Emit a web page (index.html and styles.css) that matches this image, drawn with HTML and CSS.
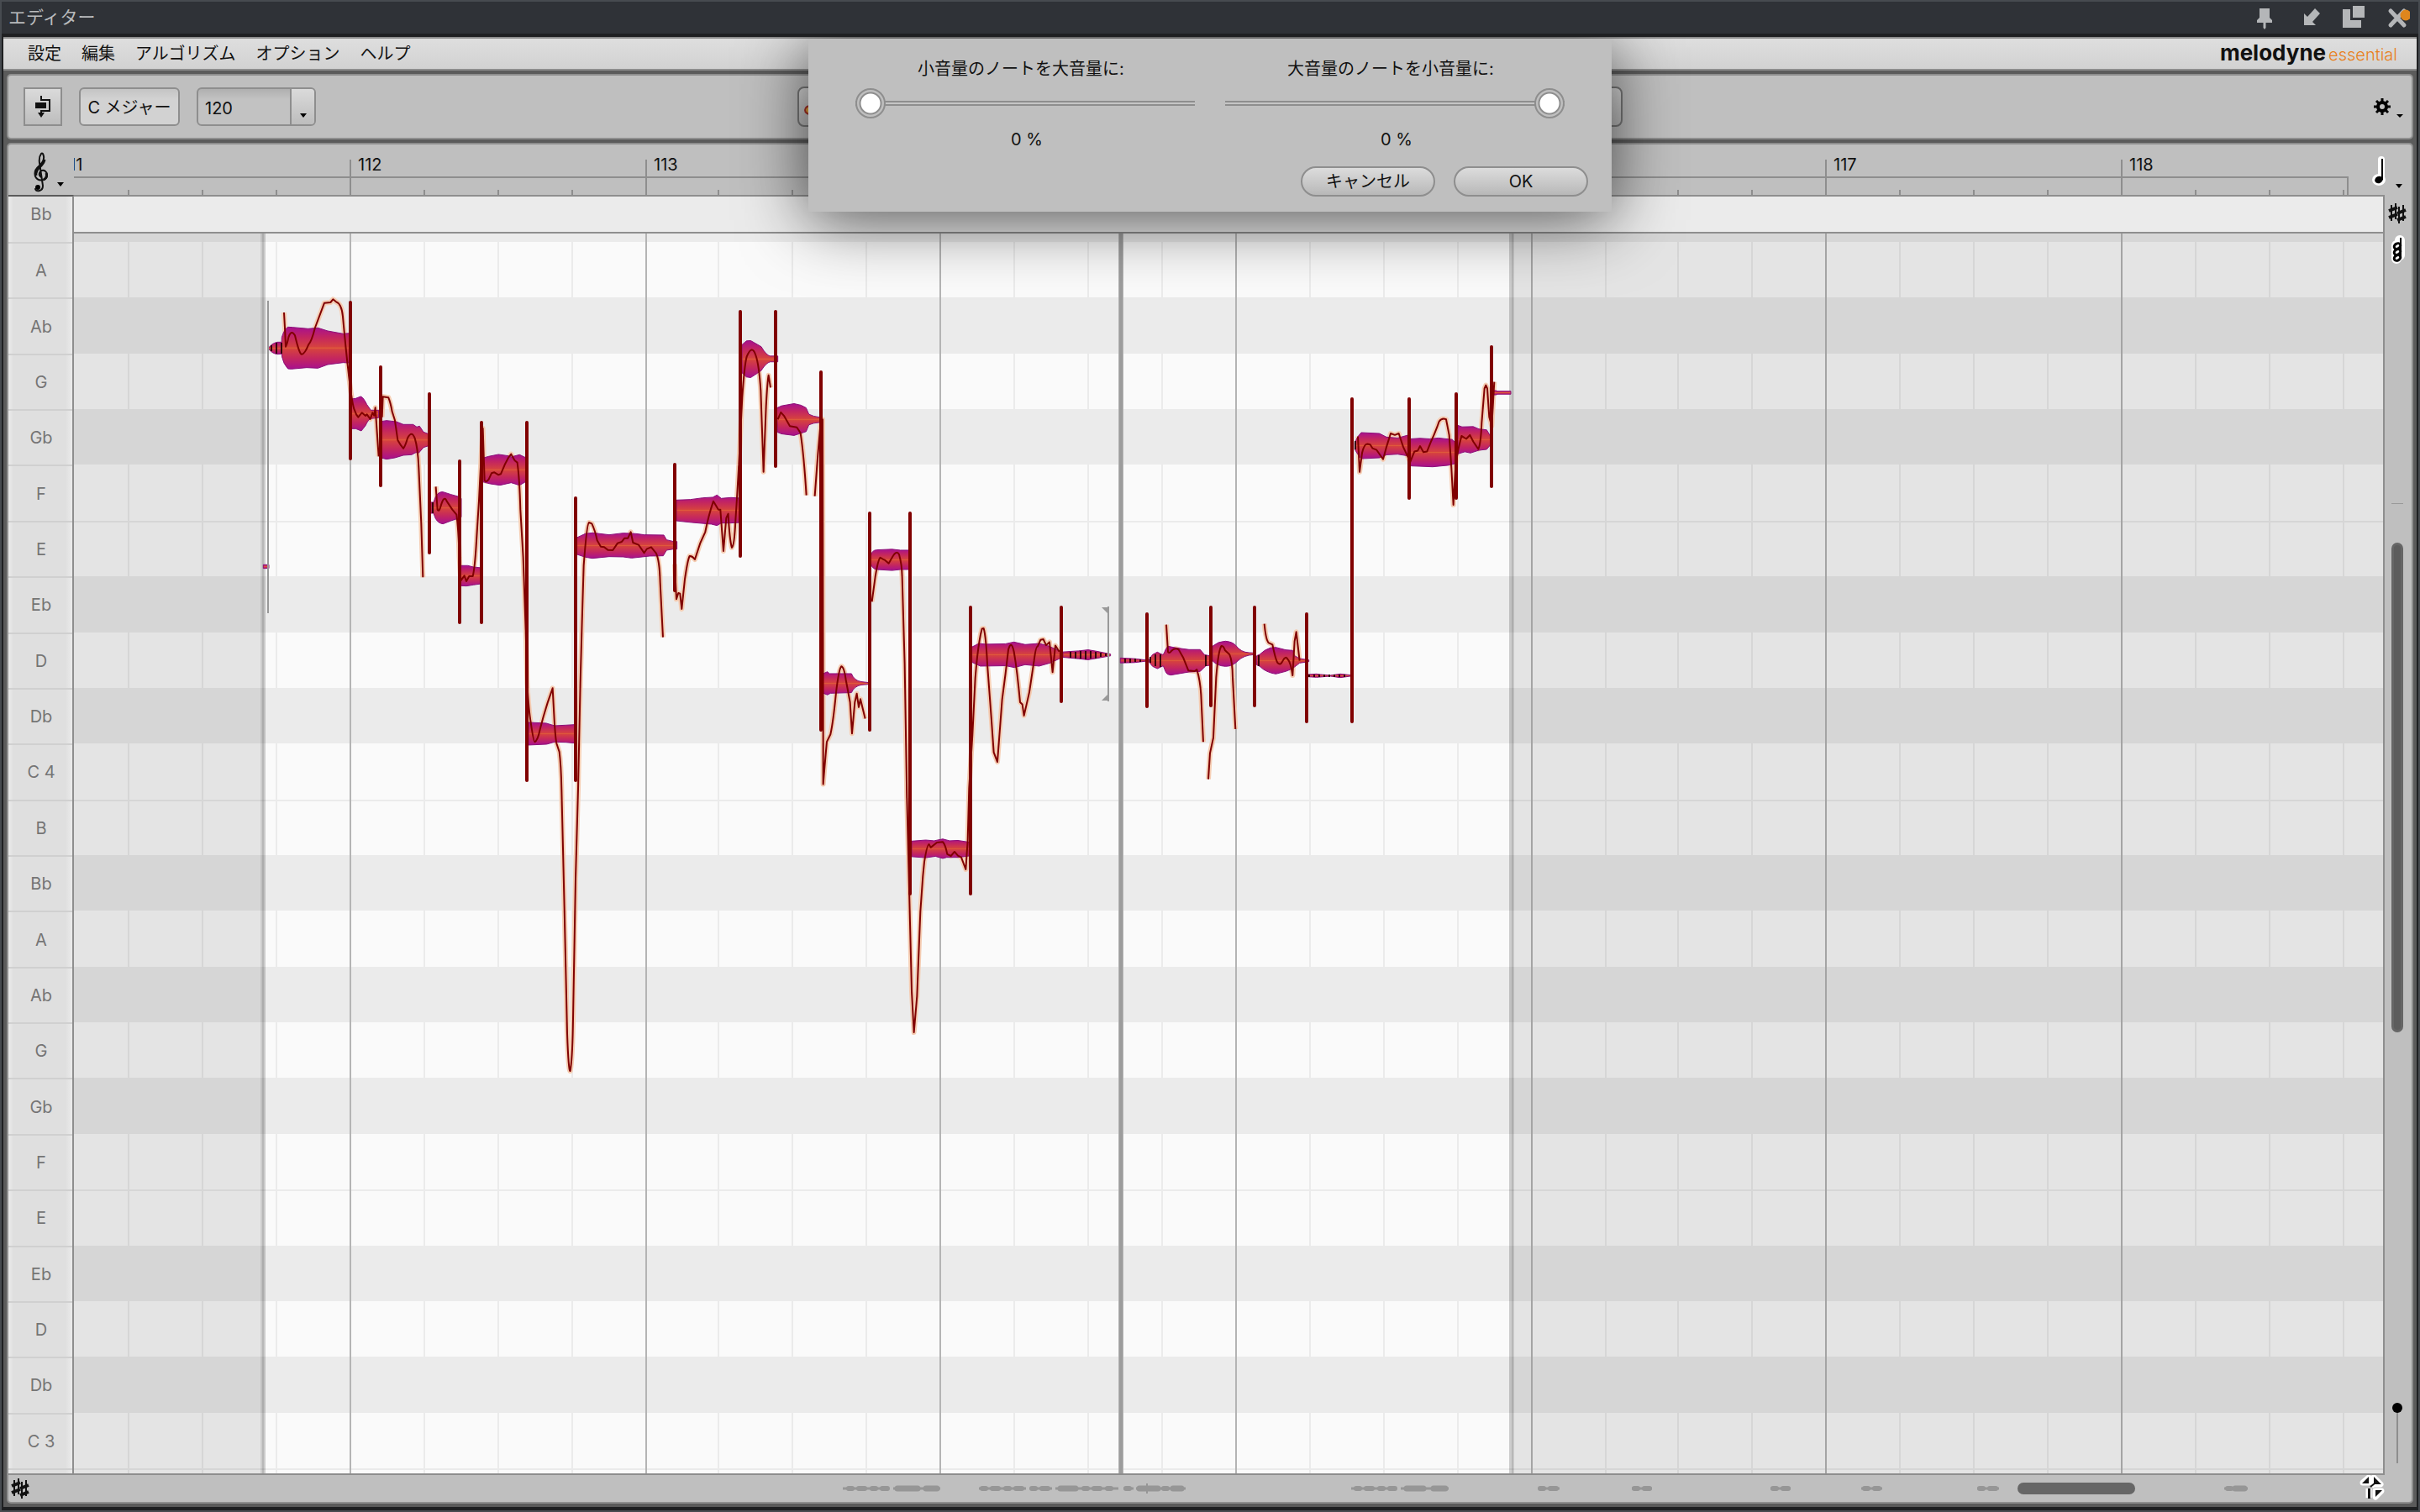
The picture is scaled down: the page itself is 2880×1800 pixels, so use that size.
FILE: index.html
```html
<!DOCTYPE html>
<html lang="ja">
<head>
  <meta charset="UTF-8" />
  <meta name="viewport" content="width=device-width, initial-scale=1.0" />
  <title>エディター</title>
  <link rel="stylesheet" href="styles.css">
</head>
<body>
  <header class="titlebar">
    <h1>エディター</h1>
    <div class="window-buttons">
      <button type="button" aria-label="Pin"><svg width="28" height="28" viewBox="0 0 28 28"><path fill="#b4b6b8" d="M8 3h12v11l3 3v3h-7.500v6l-1.500 2-1.500-2v-6H5v-3l3-3z"/></svg></button>
      <button type="button" aria-label="Minimize"><svg width="28" height="28" viewBox="0 0 28 28"><path fill="#b4b6b8" d="M8 9l4 4L21 3l6 6-9 10 4 4H8z"/></svg></button>
      <button type="button" aria-label="Restore"><svg width="28" height="28" viewBox="0 0 28 28"><path fill="#b4b6b8" d="M13 0h14v14H13zM1 4h9v13h13v9H1z"/></svg></button>
      <button type="button" aria-label="Close"><svg width="28" height="28" viewBox="0 0 28 28"><path fill="none" stroke="#b4b6b8" stroke-width="5" stroke-linecap="round" d="M5 6l16 17M21 6L5 23"/><circle cx="23" cy="11" r="6.500" fill="#df861d"/></svg></button>
    </div>
  </header>

  <main class="plugin">
    <nav class="menubar">
      <a href="#">設定</a>
      <a href="#">編集</a>
      <a href="#">アルゴリズム</a>
      <a href="#">オプション</a>
      <a href="#">ヘルプ</a>
      <div class="logo"><strong>melodyne</strong><span>essential</span></div>
    </nav>

    <section class="toolbar">
      <button type="button" class="square" aria-label="Auto scroll">
        <svg width="20" height="26" viewBox="0 0 20 26"><path fill="none" stroke="#111" stroke-width="2" d="M8 0v5h10v13H8v4"/><path fill="#111" d="M1 8h13v7H1zM4 20h8l-4 6z"/></svg>
      </button>
      <button type="button" class="scale">C メジャー</button>
      <div class="tempo">
        <input type="text" value="120" aria-label="Tempo">
        <button type="button" aria-label="Tempo menu"><svg width="8" height="5"><path d="M0 0h8L4 5z"/></svg></button>
      </div>
      <div class="toolbox">
        <svg width="12" height="16" viewBox="0 0 12 16"><path fill="#e8a33c" stroke="#a8322a" stroke-width="2" d="M11 2Q1 3 1 8t10 6z"/></svg>
      </div>
      <button type="button" class="plain gear" aria-label="Settings">
        <svg width="34" height="26" viewBox="0 0 34 26"><circle cx="9" cy="13" r="5" fill="none" stroke="#000" stroke-width="4"/><path stroke="#000" stroke-width="3" d="M9 3v5M9 18v5M-1 13h5M14 13h5M2 6l3 3M13 17l3 3M16 6l-3 3M2 20l3-3"/><path d="M26 22h8l-4 4z"/></svg>
      </button>
    </section>

    <section class="editor">
      <div class="ruler-row">
        <button type="button" class="plain clef" aria-label="Clef">
          <svg width="44" height="50" viewBox="0 0 44 50"><path fill="none" stroke="#111" stroke-width="2" stroke-linecap="round" d="M17 32q-4-3-1-7 4-3 7 1 3 6-3 9-7 2-10-4-2-7 4-12 7-6 6-12-1-5-3-3-3 4-2 11l4 27q0 5-4 6-4 1-5-2"/><circle cx="13" cy="44" r="3"/><path fill="none" stroke="#111" stroke-width="3" d="M11 30q-1-5 4-10 5-4 6-9M20 35q5-3 3-8"/><path d="M36 38h8l-4 5z"/></svg>
        </button>
        <svg class="ruler">
          <g transform="translate(-88 -172)">
            <path class="ruler-line" d="M88 211H2794M2794 210V232M87 210V232M417 190V232M769 190V232M1119 190V232M1471 190V232M1823 190V232M2173 190V232M2525 190V232"/>
            <path class="ruler-line" d="M153 226V232M241 226V232M329 226V232M505 226V232M593 226V232M681 226V232M855 226V232M943 226V232M1031 226V232M1207 226V232M1295 226V232M1383 226V232M1559 226V232M1647 226V232M1735 226V232M1911 226V232M1997 226V232M2085 226V232M2261 226V232M2349 226V232M2437 226V232M2613 226V232M2701 226V232M2789 226V232"/>
            <text x="74" y="203">111</text>
            <text x="426" y="203">112</text>
            <text x="778" y="203">113</text>
            <text x="2182" y="203">117</text>
            <text x="2534" y="203">118</text>
          </g>
        </svg>
        <button type="button" class="plain note-value" aria-label="Note value">
          <svg width="44" height="44" viewBox="0 0 44 44"><g stroke="#fff" stroke-width="8" stroke-linejoin="round" stroke-linecap="round"><ellipse cx="12" cy="30" rx="4" ry="3"/><path d="M15 6v23"/></g><ellipse cx="12" cy="30" rx="5" ry="4" transform="rotate(-25 12 30)"/><path stroke="#000" stroke-width="2" d="M16 5v25"/><path d="M32 35h8l-4 5z"/></svg>
        </button>
      </div>

      <div class="main-row">
        <div class="keys">
          <div class="key first">Bb</div>
          <div class="key-grid">
            <div class="key">A</div>
            <div class="key">Ab</div>
            <div class="key">G</div>
            <div class="key">Gb</div>
            <div class="key">F</div>
            <div class="key">E</div>
            <div class="key">Eb</div>
            <div class="key">D</div>
            <div class="key">Db</div>
            <div class="key">C 4</div>
            <div class="key">B</div>
            <div class="key">Bb</div>
            <div class="key">A</div>
            <div class="key">Ab</div>
            <div class="key">G</div>
            <div class="key">Gb</div>
            <div class="key">F</div>
            <div class="key">E</div>
            <div class="key">Eb</div>
            <div class="key">D</div>
            <div class="key">Db</div>
            <div class="key">C 3</div>
          </div>
          <div class="key last"></div>
        </div>

        <div class="roll">
          <div class="lane-top"></div>
          <div class="lane-edge"></div>
          <div class="lane-grid">
            <i></i><i class="dark"></i><i></i><i class="dark"></i><i></i><i class="line"></i><i class="dark"></i><i></i><i class="dark"></i><i></i><i class="line"></i>
            <i class="dark"></i><i></i><i class="dark"></i><i></i><i class="dark"></i><i></i><i class="line"></i><i class="dark"></i><i></i><i class="dark"></i><i></i>
          </div>
          <div class="lane-last"></div>

          <svg class="notes">
            <defs>
              <linearGradient id="blob" x1="0" y1="0" x2="0" y2="1">
                <stop offset="0" stop-color="#a8108f"/>
                <stop offset=".25" stop-color="#c4265f"/>
                <stop offset=".47" stop-color="#d54140"/>
                <stop offset=".5" stop-color="#df5a3c"/>
                <stop offset=".53" stop-color="#d54140"/>
                <stop offset=".75" stop-color="#c4265f"/>
                <stop offset="1" stop-color="#a8108f"/>
              </linearGradient>
              <g id="curves">
                <g transform="translate(280 330) scale(.3333)">
                  <path d="M174 126L177 180L180 248Q185 240 190 215Q200 185 213 208Q230 280 238 275Q248 275 262 240Q272 230 285 180L318 92L340 90L349 79L360 88Q380 95 384 140Q395 260 403 330Q415 440 424 470L432 490L439 500L452 484L465 495L470 490L482 507L490 484L496 494L500 466L512 640"/>
                  <path d="M524 500L527 427L547 430Q555 450 560 480Q572 510 574 540L580 582Q590 600 600 612Q608 600 615 575Q630 545 641 575Q652 610 655 680L664 880L670 1072"/>
                  <path d="M716 748L722 830Q728 840 733 820Q745 775 755 800L775 830L790 848Q797 900 800 1000L805 1084L818 1066L825 1086L835 1068L848 1068Q855 1040 860 960L870 800L878 640L884 540L890 725Q895 735 905 722L915 700L925 697L940 706L948 703L962 670L975 645L985 632L998 655L1007 662Q1015 720 1018 830L1028 1000L1037 1260"/>
                </g>
                <g transform="translate(520 480) scale(.3333)">
                  <path d="M317 810L322 1000Q328 1100 335 1140Q345 1210 349 1210Q360 1205 368 1165L380 1120L395 1070L413 1018L418 1110Q422 1190 427 1215L437 1245Q443 1290 445 1380L455 1800L465 2250Q470 2390 476 2385Q484 2340 486 2200L495 1700L504 1380L512 1000L518 780L524 580Q535 430 543 426L553 430Q565 455 572 490L585 512L597 514L610 524L628 525L645 500L660 495L670 482L682 482L692 460L700 498L720 506L740 535L750 520L765 514L782 535Q795 560 797 640L807 836"/>
                  <path d="M849 575L855 700L862 678L868 680L874 735L885 630Q895 560 902 546Q912 545 921 558L940 500L958 460Q970 400 987 350L1005 380L1012 380L1023 528L1033 410L1040 395Q1045 490 1053 516Q1062 510 1066 420Q1072 330 1078 220"/>
                </g>
                <g transform="translate(780 350) scale(.3333 .3827)">
                  <path d="M298 531L310 322Q318 220 326 195Q345 155 358 190Q370 220 376 300L386 553L395 350Q400 270 404 253L411 291"/>
                  <path d="M437 390L448 368L460 380L480 411L505 415L518 432Q530 500 539 626"/>
                  <path d="M569 629L580 500L590 400L597 390L599 1300L599 1525Q606 1450 612 1393L625 1370Q635 1330 645 1240Q655 1165 664 1158Q674 1160 680 1200L695 1270L702 1367L712 1270L719 1243L726 1285L732 1260L749 1321"/>
                  <path d="M773 957L785 880Q795 825 803 820Q812 825 820 828L833 838L845 820Q860 795 870 810Q880 840 881 880L890 1150L898 1568"/>
                </g>
                <g transform="translate(1020 580) scale(.3333 .4209)">
                  <path d="M178 879L188 1200L195 1425L203 1542L214 1440L226 1200L235 1100L240 1060Q250 1010 257 1010L263 1019L285 1005L306 1003Q315 1010 322 1038L335 1043L348 1031L360 1042L372 1047L388 1081L395 1000L400 850L412 700L422 540Q432 440 446 400L452 399Q460 420 465 500L480 660L488 750L501 777L518 600Q530 530 540 460Q550 430 560 465Q572 520 582 608L590 614L596 646L615 580L632 490Q638 450 645 450L655 432L665 430L675 447L687 438L698 523L708 448L722 465"/>
                </g>
                <g transform="translate(1300 640) scale(.3333)">
                  <path d="M264 311L270 408Q276 415 282 405Q295 392 308 400L325 430L343 475L365 477L373 471Q385 510 388 560L396 730"/>
                  <path d="M414 863L420 770L432 715L442 500Q450 400 461 387Q468 385 474 403L490 418Q500 440 501 500L511 684"/>
                  <path d="M614 308Q620 370 630 376L643 382Q655 440 662 448Q672 458 680 440Q690 420 698 435Q708 445 715 492L722 370L728 337L740 440"/>
                </g>
                <g transform="translate(1540 400) scale(.3333 .3571)">
                  <path d="M228 335L234 453L243 390Q250 360 262 360L272 362L280 374L295 380L318 411L330 370L345 325L360 330L374 325L390 370L415 420L430 385L442 382L450 367L462 387L475 385L490 350Q505 320 518 285Q528 272 543 278L554 330L562 440L569 563L577 430L587 375L598 333L615 343L628 330L640 352L658 377Q667 360 670 290L680 175L685 164L690 175L697 270L706 300L715 153"/>
                </g>
              </g>
            </defs>

            <g transform="translate(-88 -234)">
              <!-- beats and bars -->
              <path class="beat" d="M153 278V1754M241 278V1754M329 278V1754M505 278V1754M593 278V1754M681 278V1754M855 278V1754M943 278V1754M1031 278V1754M1207 278V1754M1295 278V1754M1383 278V1754M1559 278V1754M1647 278V1754M1735 278V1754M1911 278V1754M1997 278V1754M2085 278V1754M2261 278V1754M2349 278V1754M2437 278V1754M2613 278V1754M2701 278V1754M2789 278V1754"/>
              <path class="bar" d="M417 278V1754M769 278V1754M1119 278V1754M1471 278V1754M1823 278V1754M2173 278V1754M2525 278V1754"/>
              <rect class="shade" x="88" y="278" width="222" height="1476"/>
              <rect class="shade" x="1802" y="278" width="100%" height="1476"/>
              <path class="edge" d="M313 278V1754M1799 278V1754"/>
              <path class="edge-core" d="M313 278V1754M1800 278V1754"/>
              <path class="split" d="M1334 278V1754"/>
              <path class="split-core" d="M1334 278V1754"/>

              <use href="#curves" class="halo"/>

              <!-- note blobs -->
              <g class="blobs">
                <g transform="translate(280 330) scale(.3333)">
                  <path d="M100 1027H120V1040H100z"/>
                  <path d="M118 254Q130 236 150 232L165 232L165 274L150 275Q130 272 118 254z"/>
                  <path d="M165 250L166 215Q175 185 188 178L205 179L260 184L295 181L330 192L385 202L408 200L408 306L385 305L330 312L295 325L255 323L200 328L188 327Q172 310 167 285z"/>
                  <path d="M414 435L430 433L448 426Q458 430 470 455L484 475L512 475V502L484 505Q475 508 465 530L450 549L430 541L414 541z"/>
                  <path d="M522 515L540 512L575 516L600 526L635 526L648 535L658 532L672 553L690 560V602L672 608L655 628L645 626L630 634L600 636L570 645L540 650L524 646z"/>
                  <path d="M699 804H708L715 785Q725 765 742 767L770 776L795 783L807 790V857L795 862L770 870L742 881Q725 880 715 862L708 843H699z"/>
                  <path d="M803 1030L830 1030L850 1035L878 1038V1095L850 1099L825 1103L803 1102z"/>
                  <path d="M881 647L905 640L940 633L975 638L985 642L1015 634L1038 645V730L1015 743L985 734L945 743L910 738L881 730z"/>
                </g>
                <g transform="translate(520 480) scale(.3333)">
                  <path d="M327 1140L390 1143L420 1152L460 1150L492 1148V1214L460 1211L420 1210L392 1218L327 1221z"/>
                  <path d="M500 480L530 466L555 463L615 470L665 464L710 466L740 470L810 471L820 488L845 494H857V521H845L820 525L808 545L760 546L695 553L665 549L615 548L555 554L530 550L500 540z"/>
                  <path d="M855 346L905 344L950 338L985 336L1000 328L1015 340L1050 337L1082 339V426L1050 428L1015 428L1000 437L980 432L910 426L855 420z"/>
                </g>
                <g transform="translate(780 350) scale(.3333 .3827)">
                  <path d="M309 158L325 146L340 145L378 164Q395 190 410 193H437V211H410Q395 214 378 238Q350 255 340 260L325 258L309 245z"/>
                  <path d="M433 355L450 348L495 341L520 346L538 354L548 374L565 380L590 384V399L565 402L548 407L538 428L495 440L450 435L436 430z"/>
                  <path d="M597 1182L614 1175L622 1181L700 1181Q710 1203 735 1206L762 1209V1214L735 1216Q710 1220 700 1240L625 1242L614 1247L597 1241z"/>
                  <path d="M769 815Q772 797 790 796L845 794L875 797H909V857H875L845 860L790 857Q775 855 769 840z"/>
                </g>
                <g transform="translate(1020 580) scale(.3333 .4209)">
                  <path d="M195 1001L245 998L275 1000L306 995L330 1000L360 999L400 1004V1043L360 1047L320 1047L306 1050L280 1044L245 1048L195 1045z"/>
                  <path d="M410 452L435 442L460 444L530 443L560 438L600 445L650 442L680 448L725 464V484L690 497L650 506L600 502L562 510L530 505L440 506L410 495z"/>
                  <path d="M735 466L790 463L825 460L855 464L905 472V477L855 484L825 488L790 485L735 481z"/>
                  <path d="M940 483L990 485L1033 489V492L990 496L940 497z"/>
                </g>
                <g transform="translate(1300 640) scale(.3333)">
                  <path d="M203 435L215 418L232 409L250 418L255 415Q262 395 270 388L300 394L345 400L385 400L400 418L421 423V456L405 458L385 478L345 480L280 491Q265 490 262 480L253 458L232 468L215 460L203 445z"/>
                  <path d="M429 388Q450 370 475 370Q500 372 512 385Q530 410 560 411L577 412V418Q540 420 520 440Q500 460 475 460Q445 458 429 440z"/>
                  <path d="M587 422L598 417Q615 400 635 394L655 392L690 401L715 403L722 422L740 432L773 437V443L740 448L722 462L705 472L690 478L655 487Q620 482 598 460L587 455z"/>
                  <path d="M771 489L800 487L815 489L850 492L885 487L922 491V495L885 500L850 495L800 499L771 497z"/>
                </g>
                <g transform="translate(1540 400) scale(.3333 .3571)">
                  <path d="M217 355L228 335L240 322L305 325L330 337L370 340L409 330V400L370 394L330 396L305 406L240 409L228 395L217 378z"/>
                  <path d="M415 343L450 341L485 343L515 340L565 345L576 355V425L550 431L495 436L415 433z"/>
                  <path d="M585 298L600 303L640 302L660 310L688 313L702 335V362L688 378L660 381L630 390L610 386L585 393z"/>
                  <path d="M712 182H722L726 184H774V194H726L722 196H712z"/>
                </g>
              </g>
              <path class="stripes" d="M323 411V418M329 408V421M335 408V421M515 598V611M1274 776V783M1280 776V784M1286 775V784M1292 775V785M1298 775V784M1304 776V784M1310 777V782M1316 778V781M1339 784V789M1345 784V789M1351 784V788M1357 785V788M1369 782V789M1375 779V793M1381 779V794M1435 780V793M1498 780V793M1558 803V806M1564 803V806M1570 803V806M1576 803V806M1582 803V806M1588 803V806M1594 803V806M1600 803V806M1613 525V535"/>

              <path class="separators" d="M417 360V546M453 437V578M511 469V658M547 549V741M573 503V741M627 503V929M685 593V929M803 553V703M881 371V662M923 371V555M977 443V869M1035 611V869M1083 611V1064M1155 723V1064M1263 723V835M1365 731V841M1441 723V840M1493 723V840M1555 731V859M1609 475V859M1677 475V593M1733 469V593M1775 413V579"/>
              <use href="#curves" class="pitch"/>
              <path class="bracket" d="M319 358V730M1319 722V835"/>
              <path fill="#999" d="M1311 723h8v8zM1311 834h8v-8z"/>
            </g>
          </svg>
        </div>

        <aside class="side">
          <button type="button" class="plain" aria-label="Pitch grid">
            <svg width="22" height="26" viewBox="0 0 22 26"><g fill="none" stroke="#111"><path stroke-width="2" d="M4 3v19M9 1v19M13 5v20M18 3v19"/><path stroke-width="4" d="M1 10l10-4M1 18l10-4M11 13l10-4M11 21l10-4"/></g></svg>
          </button>
          <button type="button" class="plain" aria-label="Chord grid">
            <svg width="22" height="38" viewBox="0 0 22 38"><path fill="none" stroke="#fff" stroke-width="12" stroke-linejoin="round" stroke-linecap="round" d="M10 14v16M14 8v18"/><path stroke="#000" stroke-width="2" d="M15 5v25"/><g fill="none" stroke="#000" stroke-width="3"><ellipse cx="11" cy="15" rx="4" ry="3" transform="rotate(-30 11 15)"/><ellipse cx="11" cy="22" rx="4" ry="3" transform="rotate(-30 11 22)"/><ellipse cx="11" cy="29" rx="4" ry="3" transform="rotate(-30 11 29)"/></g></svg>
          </button>
          <div class="v-track"><span class="v-thumb"></span></div>
          <input type="range" class="v-zoom" min="0" max="100" value="100" aria-label="Vertical zoom">
        </aside>
      </div>

      <div class="bottom-row">
        <button type="button" class="plain" aria-label="Scale">
          <svg width="22" height="26" viewBox="0 0 22 26"><g fill="none" stroke="#111"><path stroke-width="2" d="M4 3v19M9 1v19M13 5v20M18 3v19"/><path stroke-width="4" d="M1 10l10-4M1 18l10-4M11 13l10-4M11 21l10-4"/></g></svg>
        </button>
        <svg class="overview">
          <g transform="translate(-88 -1756)" fill="none" stroke="#969696">
            <path stroke-width="3" d="M1003 1772H1058M1063 1772H1119M1165 1772H1221M1226 1772H1252M1256 1772H1331M1337 1772H1349M1352 1772H1411M1608 1772H1662M1667 1772H1724M1831 1772H1856M1942 1772H1966M2107 1772H2131M2215 1772H2240M2353 1772H2379M2647 1772H2675"/>
            <path stroke-width="6" stroke-linecap="round" stroke-dasharray="4 8 7 9" d="M1010 1772H1056M1169 1772H1219M1228 1772H1250M1290 1772H1330M1340 1772H1348M1385 1772H1395M1614 1772H1660M1833 1772H1856M1945 1772H1963M2110 1772H2128M2219 1772H2236M2356 1772H2376M2651 1772H2656"/>
            <path stroke-width="7" stroke-linecap="round" d="M1068 1772H1092M1102 1772H1115M1262 1772H1280M1356 1772H1378M1396 1772H1406M1674 1772H1694M1706 1772H1720M2660 1772H2671"/>
            <path stroke-width="2" d="M1365 1766V1778"/>
            <path stroke="#666" stroke-width="14" stroke-linecap="round" d="M2408 1772H2534"/>
          </g>
        </svg>
        <button type="button" class="plain" aria-label="Zoom tool">
          <svg width="34" height="32" viewBox="0 0 34 32"><g fill="#fff" stroke="#fff" stroke-width="7" stroke-linejoin="round"><path d="M5 9l7-6v6zM18 3l8 8h-8zM12 16v11M20 19h7l-7 7zM15 13l4-3"/></g><path fill="#111" d="M4 10l8-8v8zM18 2l9 9h-9zM11 16h3v12h-3zM20 18h8l-8 8z"/><path stroke="#111" stroke-width="2" d="M14 14l5-4"/></svg>
        </button>
      </div>
    </section>

    <div class="dialog" role="dialog" aria-label="ノートの音量">
      <div class="sliders">
        <div class="slider">
          <label for="quiet">小音量のノートを大音量に:</label>
          <input type="range" id="quiet" min="0" max="100" value="0">
          <output for="quiet">0 %</output>
        </div>
        <div class="slider">
          <label for="loud">大音量のノートを小音量に:</label>
          <input type="range" id="loud" min="0" max="100" value="100">
          <output for="loud">0 %</output>
        </div>
      </div>
      <div class="actions">
        <button type="button">キャンセル</button>
        <button type="button">OK</button>
      </div>
    </div>
  </main>
</body>
</html>
```

FILE: styles.css
```css
* { box-sizing: border-box; }
html { height: 100%; }
body {
  margin: 0;
  height: 100%;
  display: flex;
  flex-direction: column;
  border: 2px solid #474b50;
  background: #1f2022;
  font: 20px/24px Inter, "Noto Sans CJK JP", sans-serif;
  color: #111;
}
button, input { font: inherit; color: inherit; margin: 0; padding: 0; }
svg { display: block; }
.plain { border: 0; background: none; display: flex; }

.titlebar {
  height: 42px;
  display: flex;
  justify-content: space-between;
  align-items: center;
  padding: 0 10px 0 8px;
  background: #2f3237;
  border-bottom: 4px solid #1f2022;
}
.titlebar h1 { margin: 0; font-size: 21px; font-weight: 400; color: #b9bbbd; }
.window-buttons { display: flex; gap: 25px; }
.window-buttons button { border: 0; background: none; }

.plugin {
  position: relative;
  flex: 1;
  display: flex;
  flex-direction: column;
  overflow: hidden;
  border: solid #1f2022;
  border-width: 0 2px 4px;
  background: #5b5b5b;
}

.menubar {
  height: 40px;
  display: flex;
  align-items: center;
  gap: 24px;
  padding: 0 23px 0 29px;
  border: solid #8e8e8e;
  border-width: 2px 0;
  background: linear-gradient(#dedede, #d2d2d2);
}
.menubar a { color: #111; text-decoration: none; }
.logo { margin-left: auto; display: flex; align-items: baseline; gap: 3px; }
.logo strong { font-size: 26px; }
.logo span { font-weight: 300; color: #e8801c; }

.toolbar {
  height: 78px;
  margin: 4px;
  display: flex;
  align-items: center;
  gap: 20px;
  padding: 0 10px 0 18px;
  position: relative;
  border: 2px solid #8e8e8e;
  border-radius: 5px;
  background: #bfbfbf;
}
.toolbar .square, .toolbar .scale, .tempo {
  height: 46px;
  border: 2px solid #8e8e8e;
  background: linear-gradient(#dadada, #bdbdbd);
}
.toolbar .square { width: 46px; display: flex; align-items: center; justify-content: center; }
.toolbar .scale { width: 120px; padding-top: 2px; border-radius: 6px; background: linear-gradient(#c4c4c4, #d2d2d2 12px); }
.tempo { width: 142px; display: flex; border-radius: 6px; overflow: hidden; background: linear-gradient(#b0b0b0, #c2c2c2 12px); }
.tempo input { width: 109px; padding: 3px 0 0 8px; border: 0; background: none; }
.tempo button {
  flex: 1;
  display: flex;
  align-items: flex-end;
  justify-content: center;
  padding-bottom: 8px;
  border: 0;
  border-left: 2px solid #8e8e8e;
  background: linear-gradient(#dadada, #bdbdbd);
}
.toolbox {
  position: absolute;
  left: 50%;
  width: 982px;
  height: 48px;
  transform: translateX(-50%);
  display: flex;
  align-items: center;
  padding: 8px 6px 0;
  border: 2px solid #7a7a7a;
  border-radius: 8px;
  background: linear-gradient(#d8d8d8, #bdbdbd);
}
.gear { margin-left: auto; }
.gear svg { overflow: visible; }

.editor {
  flex: 1;
  margin: 0 4px 4px;
  display: flex;
  flex-direction: column;
  border: 2px solid #8e8e8e;
  border-radius: 5px;
  background: #bfbfbf;
}
.ruler-row { height: 60px; display: flex; }
.clef { width: 78px; padding: 7px 0 0 22px; }
.ruler { flex: 1; height: 60px; overflow: hidden; }
.ruler text { font-size: 20px; fill: #111; }
.ruler-line { stroke: #8e8e8e; stroke-width: 2; fill: none; }
.note-value { width: 75px; padding: 12px 0 0 24px; }

.main-row { flex: 1; display: flex; min-height: 0; }
.keys {
  width: 78px;
  display: flex;
  flex-direction: column;
  border: solid #8e8e8e;
  border-width: 2px 2px 2px 0;
  border-top-color: #5b5b5b;
  background: linear-gradient(90deg, #ebebeb, #dfdfdf 6px, #dfdfdf 68px, #ebebeb);
}
.key-grid, .lane-grid { flex: 1; display: grid; grid-template-rows: repeat(22, 1fr); }
.key { display: flex; align-items: center; justify-content: center; padding-left: 2px; border-top: 2px solid #d0d0d0; color: #757575; }
.key.first { height: 54px; padding-bottom: 12px; border: 0; }
.key.last { height: 6px; }

.roll {
  position: relative;
  flex: 1;
  display: flex;
  flex-direction: column;
  border: solid #8e8e8e;
  border-width: 2px 2px 2px 0;
  background: #fafafa;
}
.lane-top { height: 44px; background: #ebebeb; border-bottom: 2px solid #8e8e8e; }
.lane-edge { height: 10px; background: #ebebeb; }
.lane-grid .dark { background: #ebebeb; }
.lane-grid .line { border-top: 2px solid #ebebeb; }
.lane-last { height: 6px; border-top: 2px solid #ebebeb; }

.notes { position: absolute; inset: 0; width: 100%; height: 100%; overflow: hidden; }
.beat { stroke: #ebebeb; stroke-width: 2; }
.bar { stroke: #b4b4b4; stroke-width: 2; }
.shade { fill: rgba(0, 0, 0, .085); }
.edge { stroke: rgba(0, 0, 0, .18); stroke-width: 6; }
.edge-core { stroke: rgba(0, 0, 0, .1); stroke-width: 2; }
.split { stroke: #b4b4b4; stroke-width: 6; }
.split-core { stroke: #9c9c9c; stroke-width: 4; }
.blobs path { fill: url(#blob); stroke: #8c0f78; stroke-width: 1; vector-effect: non-scaling-stroke; }
.stripes { stroke: #36040c; stroke-width: 2; }
#curves path { fill: none; vector-effect: non-scaling-stroke; stroke-linejoin: round; }
.halo { stroke: #f5cdb3; stroke-width: 6; }
.pitch { stroke: #800000; stroke-width: 2; }
.separators { stroke: #800000; stroke-width: 4; stroke-linecap: round; }
.bracket { stroke: #999; stroke-width: 2; }

.side { width: 32px; display: flex; flex-direction: column; align-items: center; padding: 9px 2px 14px 0; }
.side .plain + .plain { margin-top: 11px; }
.v-track { width: 14px; flex: 1; margin: 283px 0 10px; border-top: 1px solid #999; }
.v-thumb { display: block; width: 14px; height: 55%; margin-top: 46px; border: 3px solid #666; border-radius: 7px; background: #5c5c5c; }

input[type="range"] { appearance: none; background: none; }
.v-zoom { width: 14px; height: 72px; writing-mode: vertical-lr; direction: rtl; }
.v-zoom::-webkit-slider-runnable-track { width: 2px; background: #8e8e8e; }
.v-zoom::-webkit-slider-thumb { appearance: none; width: 12px; height: 12px; margin-left: -5px; border-radius: 50%; background: #000; }

.bottom-row { height: 32px; display: flex; align-items: center; }
.bottom-row > .plain:first-child { width: 78px; padding-left: 3px; }
.overview { flex: 1; height: 32px; }
.bottom-row > .plain:last-child { width: 63px; }

.dialog {
  position: absolute;
  top: 2px;
  left: 50%;
  width: 956px;
  height: 206px;
  transform: translateX(-50%);
  padding: 24px 28px 18px 56px;
  background: #bfbfbf;
  box-shadow: 0 10px 80px rgba(0, 0, 0, .65);
}
.sliders { display: flex; gap: 36px; }
.slider { width: 404px; display: flex; flex-direction: column; align-items: center; }
.slider label { padding-right: 10px; }
.slider input { width: 100%; height: 38px; margin: 10px 0 12px; }
.slider input::-webkit-slider-runnable-track {
  height: 6px;
  background: linear-gradient(#8e8e8e 2px, #c4c4c4 2px, #c4c4c4 4px, #8e8e8e 4px);
}
.slider input::-webkit-slider-thumb {
  appearance: none;
  width: 36px;
  height: 36px;
  margin-top: -15px;
  border: 2px solid #8e8e8e;
  border-radius: 50%;
  background: radial-gradient(circle, #fff 11px, #8e8e8e 12px, #8e8e8e 13px, #bfbfbf 14px);
}
.slider output { padding-left: 4px; }
.actions { display: flex; justify-content: flex-end; gap: 22px; margin-top: 20px; }
.actions button {
  width: 160px;
  height: 36px;
  border: 2px solid #8e8e8e;
  border-radius: 18px;
  background: linear-gradient(#dcdcdc, #b8b8b8);
}
```
